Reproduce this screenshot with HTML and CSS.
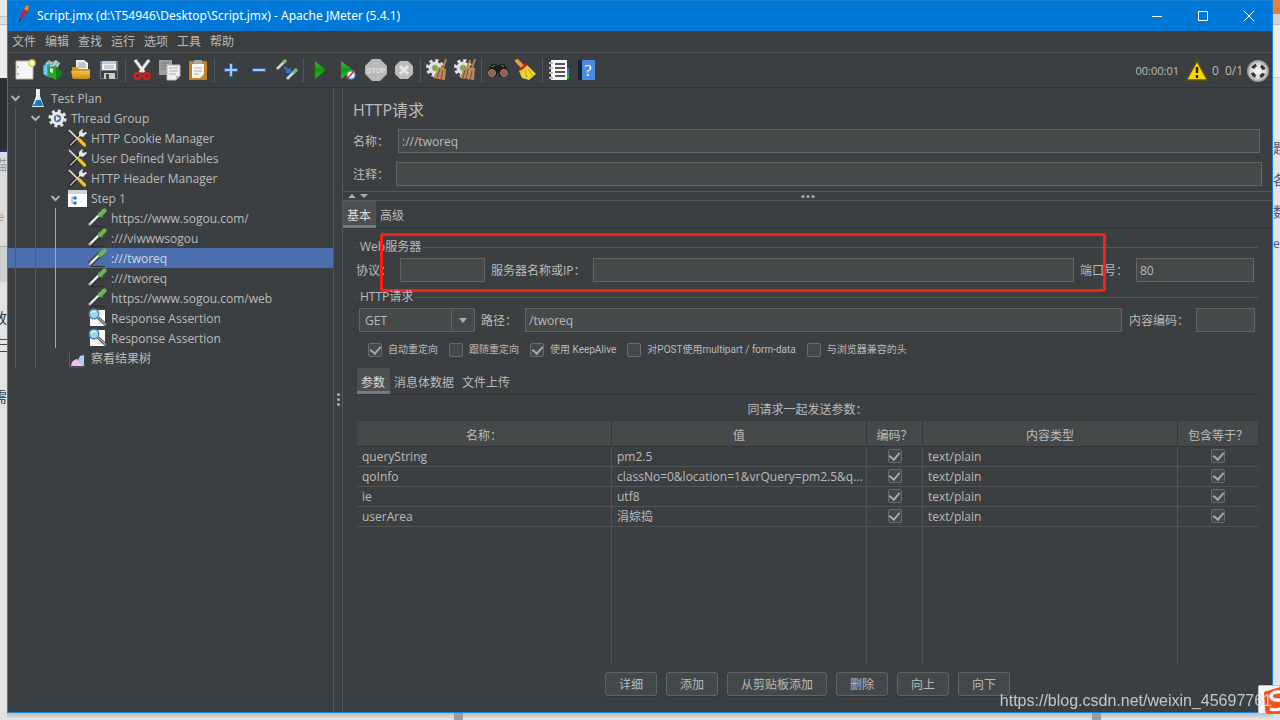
FILE: index.html
```html
<!DOCTYPE html>
<html lang="zh-CN">
<head>
<meta charset="utf-8">
<title>Apache JMeter</title>
<link rel="stylesheet" href="styles.css">
</head>
<body>
<svg class="defs" aria-hidden="true">
  <defs>
    <linearGradient id="gold" x1="0" y1="0" x2="0" y2="1"><stop offset="0" stop-color="#f5c04a"/><stop offset="1" stop-color="#c98a10"/></linearGradient>
    <linearGradient id="green" x1="0" y1="0" x2="0" y2="1"><stop offset="0" stop-color="#4fb04f"/><stop offset=".5" stop-color="#0a9a0a"/><stop offset="1" stop-color="#26c826"/></linearGradient>
    <radialGradient id="silver"><stop offset="0" stop-color="#fff"/><stop offset=".7" stop-color="#d4d4d4"/><stop offset="1" stop-color="#8e8e8e"/></radialGradient>
  </defs>
  <symbol id="gearbit" viewBox="0 0 24 24">
    <circle cx="10" cy="10" r="7.6" fill="none" stroke="#dcdcdc" stroke-width="3" stroke-dasharray="3.2 2.77"/>
    <circle cx="10" cy="10" r="6.5" fill="#e3e3e0"/><circle cx="10" cy="10" r="3" fill="#75b52c" stroke="#a9a9a0"/>
  </symbol>
  <symbol id="tools" viewBox="0 0 20 20">
    <path d="M2.500 17 12 7.500" stroke="#222" stroke-width="4" stroke-linecap="round"/>
    <path d="M2.500 17 12 7.500" stroke="#b9bbb8" stroke-width="1.6" stroke-linecap="round"/>
    <path d="M11 8V4l3-3 1 1-1 2 1 1 3-1 1 1-4 4z" fill="#e6e6e6"/>
    <path d="M1 2 10 11" stroke="#e3e3e3" stroke-width="1.6"/>
    <path d="M11 11.500 16.500 17" stroke="#f4c21c" stroke-width="3.2" stroke-linecap="round"/>
  </symbol>
  <symbol id="dropper" viewBox="0 0 20 20">
    <path d="M1 17 11 7" stroke="#20221f" stroke-width="4.600"/>
    <path d="M1 17 11 7" stroke="#b9bbb8" stroke-width="2.800"/>
    <path d="M3 15 10 8" stroke="#fff" stroke-width="1.200"/>
    <path d="M10 4l5 5" stroke="#3e7a30" stroke-width="2.500"/>
    <path d="M12 7 16.500 2.500" stroke="#6fb356" stroke-width="4.200" stroke-linecap="round"/>
    <path d="M3 18.500h14" stroke="#292b2c"/>
  </symbol>
  <symbol id="assert" viewBox="0 0 20 20">
    <path d="M2 2h15v16H2z" fill="#fafafa"/><path d="M10 14l5-2v4h-5z" fill="#ddd"/>
    <path d="M10 9.500 18 17" stroke="#555" stroke-width="3"/><path d="M10 9.500 18 17" stroke="#ccc"/>
    <circle cx="6" cy="6" r="4.800" fill="#9fd3ef" stroke="#4986ac" stroke-width="1.400"/>
    <path d="M3 5q2-3 5-1" stroke="#e1f7ff" fill="none" stroke-width="1.500"/>
  </symbol>
  <symbol id="chev" viewBox="0 0 20 20"><path d="M3.500 8 7.500 12 11.500 8" fill="none" stroke="#afb1b3" stroke-width="2"/></symbol>
</svg>

<div class="desktop">
  <div class="behind behind-left" aria-hidden="true">
    <i class="bl-page"></i><i class="bl-dark"></i><i class="bl-blue"></i>
    <div class="bl-grey"><span class="crop muted">描</span><span class="crop muted te">te</span></div>
    <i class="bl-band"></i>
    <div class="bl-white"><span class="crop">放</span><i class="bl-lines"></i><span class="crop">需</span></div>
  </div>

  <main class="window">
    <header class="titlebar">
      <svg class="feather" viewBox="0 0 16 20"><path d="M3 18 6 12" stroke="#272a55" stroke-width="1.300"/><path d="M4 15 6 8 11 2 13 3 11 9 7 14z" fill="#c3243a"/><path d="M8 5 11 1l2 1-1 5z" fill="#f08327"/></svg>
      <h1 class="title">Script.jmx (d:\T54946\Desktop\Script.jmx) - Apache JMeter (5.4.1)</h1>
      <button class="win-btn" aria-label="最小化"><svg viewBox="0 0 12 12"><path d="M1 6.500h10"/></svg></button>
      <button class="win-btn" aria-label="最大化"><svg viewBox="0 0 12 12"><path d="M1.500 1.500h9v9h-9z"/></svg></button>
      <button class="win-btn" aria-label="关闭"><svg viewBox="0 0 12 12"><path d="M1 1 11 11M11 1 1 11"/></svg></button>
    </header>

    <nav class="menubar">
      <button>文件</button><button>编辑</button><button>查找</button><button>运行</button><button>选项</button><button>工具</button><button>帮助</button>
    </nav>

    <div class="toolbar">
      <button aria-label="新建"><svg viewBox="0 0 24 24"><path d="M3 3h17v18H3z" fill="#f5f5f3" stroke="#b8b8b4"/><path d="M5 8v2M5 15v2" stroke="#888"/><circle cx="19" cy="5" r="3" fill="#fffbd0" stroke="#e5cf4c" stroke-width="1.600"/></svg></button>
      <button aria-label="模板"><svg viewBox="0 0 24 24"><path d="M4 6l4-4 3 2 4-2 4 3-3 6H5z" fill="#b9cbd5"/><path d="M7 3l3 4M13 3l-2 4M17 4l-3 4" stroke="#73899a"/><path d="M2 7l7-1v14l-7-4z" fill="#23a4d8"/><path d="M3 8l3-1v11l-3-2z" fill="#6bcdf0"/><path d="M7 9l8-1v14l-8-4z" fill="#22a92a"/><path d="M15 8l6 6v3l-6 5z" fill="#13821d"/><path d="M9 10l3 1v4l-3-1z" fill="#d9f7db"/></svg></button>
      <button aria-label="打开"><svg viewBox="0 0 24 24"><path d="M7 2h8l4 3v9H7z" fill="#f0f0ee"/><path d="M9 5h7M9 7h8M9 9h8" stroke="#999"/><path d="M3 9h5l2 2h11v9H3z" fill="#d5941c"/><path d="M2 13h19l-1 8H4z" fill="url(#gold)"/></svg></button>
      <button aria-label="保存"><svg viewBox="0 0 24 24"><path d="M3 3h18v18H4l-1-1z" fill="#777c82"/><path d="M4 13h16v7H4z" fill="#3a3e43"/><path d="M5 3h14v9H5z" fill="#f4f4f4"/><path d="M5 3h14v3H5z" fill="#b4cdee"/><path d="M7 8h10M7 10h10" stroke="#aaa"/><path d="M7 15h11v6H7z" fill="#c8cacc"/><path d="M9 16h3v5H9z" fill="#42464b"/></svg></button>
      <i class="sep"></i>
      <button aria-label="剪切"><svg viewBox="0 0 24 24"><path d="M5 2 14 14M19 2 10 14" stroke="#777" stroke-width="4"/><path d="M5 2 14 14M19 2 10 14" stroke="#ededed" stroke-width="2.600"/><ellipse cx="7.500" cy="18" rx="3.200" ry="2.800" fill="none" stroke="#d42020" stroke-width="2.600" transform="rotate(-35 7.500 18)"/><ellipse cx="16.500" cy="18" rx="3.200" ry="2.800" fill="none" stroke="#d42020" stroke-width="2.600" transform="rotate(35 16.500 18)"/></svg></button>
      <button aria-label="复制"><svg viewBox="0 0 24 24"><path d="M1 2h13v15H1z" fill="#9fa1a0"/><path d="M3 5h8M3 8h8M3 11h8" stroke="#777"/><path d="M9 7h13v11l-4 4H9z" fill="#f0f0ee" stroke="#bbb"/><path d="M11 10h9M11 13h9M11 16h7" stroke="#aaa"/><path d="M22 18h-4v4z" fill="#bbb"/></svg></button>
      <button aria-label="粘贴"><svg viewBox="0 0 24 24"><rect x="3" y="3" width="18" height="19" rx="1" fill="#c48222"/><path d="M6 6h12v14H6z" fill="#f7f7f5"/><path d="M8 2h8v4H8z" fill="#a5a8a8"/><path d="M8 10h8M8 13h8M8 16h5" stroke="#aaa"/><path d="M18 16l-4 4h4z" fill="#999"/></svg></button>
      <i class="sep"></i>
      <button aria-label="展开"><svg viewBox="0 0 24 24"><path d="M12 5v14M5 12h14" stroke="#3266a8" stroke-width="4"/><path d="M12 6v12M6 12h12" stroke="#a6c8f0" stroke-width="2"/></svg></button>
      <button aria-label="折叠"><svg viewBox="0 0 24 24"><path d="M5 12h14" stroke="#3266a8" stroke-width="4"/><path d="M6 12h12" stroke="#a6c8f0" stroke-width="2"/></svg></button>
      <button aria-label="切换"><svg viewBox="0 0 24 24"><path d="M2 11 10 3M12 21 21 12" stroke="#d2d5d0" stroke-width="2.600"/><path d="M8 5 11 2M18 15 22 11" stroke="#7bb765" stroke-width="3.400"/><path d="M9 9 14 13M15 10v4h-4" stroke="#3278d8" stroke-width="1.800" fill="none"/></svg></button>
      <i class="sep"></i>
      <button aria-label="启动"><svg viewBox="0 0 24 24"><path d="M7 3 18 12 7 21z" fill="url(#green)" stroke="#147014" stroke-width=".6"/></svg></button>
      <button aria-label="不停顿开始"><svg viewBox="0 0 24 24"><path d="M5 3 17 12 5 21z" fill="url(#green)"/><circle cx="15" cy="17" r="4" fill="#f2f6ff" stroke="#5ba0dc" stroke-width="1.400"/><path d="M11 21 19 12" stroke="#d82b2b" stroke-width="1.500"/></svg></button>
      <button disabled aria-label="停止"><svg viewBox="0 0 24 24"><path d="M8 1h8l7 7v8l-7 7H8l-7-7V8z" fill="#b9b9b9"/><text x="12" y="15" text-anchor="middle" class="stop">STOP</text></svg></button>
      <button disabled aria-label="关闭"><svg viewBox="0 0 24 24"><path d="M8 3h8l5 5v8l-5 5H8l-5-5V8z" fill="#bcbcbc"/><path d="M8 8l8 8M16 8l-8 8" stroke="#e6e6e6" stroke-width="3"/></svg></button>
      <i class="sep"></i>
      <button aria-label="清除"><svg viewBox="0 0 24 24"><use href="#gearbit"/><path d="M21 1 18 10" stroke="#b98247" stroke-width="2"/><path d="M14 9l7 2-1 11-12-2z" fill="#b88a5e"/><path d="M15 11 12 20M18 12l-2 9" stroke="#79512c"/></svg></button>
      <button aria-label="清除全部"><svg viewBox="0 0 24 24"><use href="#gearbit"/><path d="M17 2 14 10M22 1 19 10" stroke="#b98247" stroke-width="2"/><path d="M11 9l11 1-1 12-14-2z" fill="#b88a5e"/><path d="M12 12 10 20M15 11l-2 10M19 13l-2 9" stroke="#79512c"/></svg></button>
      <i class="sep"></i>
      <button aria-label="搜索"><svg viewBox="0 0 24 24"><path d="M1 14 6 6h4l2 2 2-2h4l5 8-3 5h-6l-2-5-2 5H4z" fill="#1c1c1c"/><path d="M6 9l3-2M15 7l3 2" stroke="#888"/><circle cx="6" cy="15" r="3.500" fill="#a05a3c" stroke="#8a8a8a"/><circle cx="18" cy="15" r="3.500" fill="#a05a3c" stroke="#8a8a8a"/></svg></button>
      <button aria-label="重置搜索"><svg viewBox="0 0 24 24"><path d="M3 3 9 9" stroke="#dca23c" stroke-width="4" stroke-linecap="round"/><path d="M5 13 13 7 22 16 15 22 8 20z" fill="#ead436"/><path d="M6 12 13 6" stroke="#cb2d25" stroke-width="2.600"/><path d="M11 12 13 20M14 11l5 7" stroke="#b29a16"/></svg></button>
      <i class="sep"></i>
      <button aria-label="函数助手"><svg viewBox="0 0 24 24"><path d="M19 10h3v6h-3z" fill="#2d7fe0"/><path d="M19 16h3v5h-3z" fill="#3bad36"/><path d="M4 2h16v20H4z" fill="#f8f8f8"/><path d="M8 6h10M8 10h10M8 14h10M8 18h10" stroke="#222" stroke-width="1.400"/><path d="M2 5h4M2 10h4M2 15h4M2 20h4" stroke="#bbb" stroke-width="2"/></svg></button>
      <button aria-label="帮助"><svg viewBox="0 0 24 24"><path d="M3 2h17v20H3z" fill="#4a8ae0"/><path d="M3 2h4v20H3z" fill="#15243b"/><text x="13" y="18" text-anchor="middle" class="help">?</text></svg></button>
      <div class="status">
        <span class="clock">00:00:01</span>
        <svg class="warn" viewBox="0 0 24 24"><path d="M12 2 22.500 21H1.500z" fill="#fbd500" stroke="#5e5010" stroke-width="1.500" stroke-linejoin="round"/><path d="M12 8v6M12 16v3" stroke="#1d1a08" stroke-width="2.400"/></svg>
        <span class="errors">0</span>
        <span class="threads">0/1</span>
        <svg class="remote" viewBox="0 0 24 24"><circle cx="12" cy="12" r="11" fill="url(#silver)"/><circle cx="12" cy="12" r="6" fill="none" stroke="#333" stroke-width="3.200" stroke-dasharray="4.600 4.820" stroke-dashoffset="-2.400"/></svg>
      </div>
    </div>

    <div class="split">
      <aside class="tree" role="tree">
        <div class="row" role="treeitem"><svg class="cell"><use href="#chev"/></svg><svg class="cell" viewBox="0 0 20 20"><path d="M8 1h4v7l4 11H4L8 8z" fill="#e4e8ea"/><path d="M7 12h6l2 6H5z" fill="#1878d2"/><path d="M9 2v7L6 16" stroke="#fff" fill="none"/></svg><span>Test Plan</span></div>
        <div class="row" role="treeitem"><i class="cell guide"></i><svg class="cell"><use href="#chev"/></svg><svg class="cell" viewBox="0 0 20 20"><circle cx="9.500" cy="10.500" r="7.600" fill="none" stroke="#e8e8e8" stroke-width="3" stroke-dasharray="3 2.970"/><circle cx="9.500" cy="10.500" r="5.200" fill="#587ba8" stroke="#eaeaea" stroke-width="3"/><path d="M8 8l4 2.500L8 13z" fill="#e5f1ff"/></svg><span>Thread Group</span></div>
        <div class="row" role="treeitem"><i class="cell guide"></i><i class="cell guide"></i><i class="cell"></i><svg class="cell"><use href="#tools"/></svg><span>HTTP Cookie Manager</span></div>
        <div class="row" role="treeitem"><i class="cell guide"></i><i class="cell guide"></i><i class="cell"></i><svg class="cell"><use href="#tools"/></svg><span>User Defined Variables</span></div>
        <div class="row" role="treeitem"><i class="cell guide"></i><i class="cell guide"></i><i class="cell"></i><svg class="cell"><use href="#tools"/></svg><span>HTTP Header Manager</span></div>
        <div class="row" role="treeitem"><i class="cell guide"></i><i class="cell guide"></i><svg class="cell"><use href="#chev"/></svg><svg class="cell" viewBox="0 0 20 20"><path d="M0 2h19v17H0z" fill="#fdfdfd"/><path d="M0 2h19v4H0z" fill="#d0d2d4"/><path d="M4 8v8M4 10h3M4 15h3" stroke="#9ab"/><circle cx="7" cy="10" r="1.800" fill="#2878cf"/><circle cx="7" cy="15" r="1.800" fill="#2878cf"/></svg><span>Step 1</span></div>
        <div class="row" role="treeitem"><i class="cell guide"></i><i class="cell guide"></i><i class="cell guide lit"></i><i class="cell"></i><svg class="cell"><use href="#dropper"/></svg><span>https://www.sogou.com/</span></div>
        <div class="row" role="treeitem"><i class="cell guide"></i><i class="cell guide"></i><i class="cell guide lit"></i><i class="cell"></i><svg class="cell"><use href="#dropper"/></svg><span>:///viwwwsogou</span></div>
        <div class="row selected" role="treeitem" aria-selected="true"><i class="cell guide"></i><i class="cell guide"></i><i class="cell guide lit"></i><i class="cell"></i><svg class="cell"><use href="#dropper"/></svg><span>:///tworeq</span></div>
        <div class="row" role="treeitem"><i class="cell guide"></i><i class="cell guide"></i><i class="cell guide lit"></i><i class="cell"></i><svg class="cell"><use href="#dropper"/></svg><span>:///tworeq</span></div>
        <div class="row" role="treeitem"><i class="cell guide"></i><i class="cell guide"></i><i class="cell guide lit"></i><i class="cell"></i><svg class="cell"><use href="#dropper"/></svg><span>https://www.sogou.com/web</span></div>
        <div class="row" role="treeitem"><i class="cell guide"></i><i class="cell guide"></i><i class="cell guide lit"></i><i class="cell"></i><svg class="cell"><use href="#assert"/></svg><span>Response Assertion</span></div>
        <div class="row" role="treeitem"><i class="cell guide"></i><i class="cell guide"></i><i class="cell guide lit"></i><i class="cell"></i><svg class="cell"><use href="#assert"/></svg><span>Response Assertion</span></div>
        <div class="row" role="treeitem"><i class="cell guide"></i><i class="cell guide"></i><i class="cell"></i><svg class="cell" viewBox="0 0 20 20"><path d="M1.500 4v15H17" fill="none" stroke="#5b5e60"/><path d="M3 18l1-4 4-3 3 2 2-2 3 1v6z" fill="#f0a6e4"/><path d="M10 12l2-4 4-1v11h-2z" fill="#a9cdf7"/><path d="M5 13l4-2 5 7H3z" fill="#f7bdee"/></svg><span>察看结果树</span></div>
      </aside>

      <div class="divider"><i></i><i></i><i></i></div>

      <section class="editor">
        <h2>HTTP请求</h2>
        <div class="field name-row"><label for="name">名称：</label><input id="name" value=":///tworeq"></div>
        <div class="field comment-row"><label for="comment">注释：</label><input id="comment"></div>
        <div class="hdivider"><b class="up"></b><b class="down"></b><span class="dots"><i></i><i></i><i></i></span></div>

        <div class="tabs" role="tablist"><button role="tab" class="active" aria-selected="true">基本</button><button role="tab">高级</button></div>

        <div class="group web">
          <div class="legend">Web服务器</div>
          <div class="line web-line">
            <label class="w-proto" for="proto">协议：</label><input class="i-proto" id="proto">
            <label class="w-server" for="server">服务器名称或IP：</label><input class="grow" id="server">
            <label class="w-port" for="port">端口号：</label><input class="i-port" id="port" value="80">
          </div>
          <div class="callout"></div>
        </div>

        <div class="group http">
          <div class="legend">HTTP请求</div>
          <div class="line http-line">
            <div class="combo"><select aria-label="方法"><option>GET</option></select><b class="down"></b></div>
            <label class="w-path" for="path">路径：</label><input class="grow" id="path" value="/tworeq">
            <label class="w-enc" for="enc">内容编码：</label><input class="i-enc" id="enc">
          </div>
        </div>

        <div class="checks">
          <label><input type="checkbox" checked>自动重定向</label>
          <label><input type="checkbox">跟随重定向</label>
          <label><input type="checkbox" checked>使用 KeepAlive</label>
          <label><input type="checkbox">对POST使用multipart / form-data</label>
          <label><input type="checkbox">与浏览器兼容的头</label>
        </div>

        <div class="params">
          <div class="tabs" role="tablist"><button role="tab" class="active" aria-selected="true">参数</button><button role="tab">消息体数据</button><button role="tab">文件上传</button></div>
          <div class="caption">同请求一起发送参数：</div>
          <div class="table-box">
            <table>
              <colgroup><col><col><col class="c-enc"><col><col class="c-inc"></colgroup>
              <thead><tr><th>名称：</th><th>值</th><th>编码？</th><th>内容类型</th><th>包含等于？</th></tr></thead>
              <tbody>
                <tr><td>queryString</td><td>pm2.5</td><td class="mid"><input type="checkbox" checked aria-label="编码"></td><td>text/plain</td><td class="mid"><input type="checkbox" checked aria-label="包含等于"></td></tr>
                <tr><td>qoInfo</td><td>classNo=0&amp;location=1&amp;vrQuery=pm2.5&amp;q...</td><td class="mid"><input type="checkbox" checked aria-label="编码"></td><td>text/plain</td><td class="mid"><input type="checkbox" checked aria-label="包含等于"></td></tr>
                <tr><td>ie</td><td>utf8</td><td class="mid"><input type="checkbox" checked aria-label="编码"></td><td>text/plain</td><td class="mid"><input type="checkbox" checked aria-label="包含等于"></td></tr>
                <tr><td>userArea</td><td>涓婃捣</td><td class="mid"><input type="checkbox" checked aria-label="编码"></td><td>text/plain</td><td class="mid"><input type="checkbox" checked aria-label="包含等于"></td></tr>
                <tr class="filler"><td></td><td></td><td></td><td></td><td></td></tr>
              </tbody>
            </table>
          </div>
        </div>
        <div class="actions"><button>详细</button><button>添加</button><button>从剪贴板添加</button><button>删除</button><button>向上</button><button>向下</button></div>
      </section>
    </div>
  </main>

  <div class="behind behind-right" aria-hidden="true">
    <i class="br-orange"></i><i class="br-bar"></i><i class="br-page"></i>
    <div class="br-text"><span class="crop">题</span><span class="crop">各</span><span class="crop">数</span><span class="crop er">er</span></div>
  </div>
  <div class="behind-bottom" aria-hidden="true"><i></i><i></i></div>
</div>
<svg class="ime" viewBox="0 0 22 30" aria-hidden="true"><rect x=".5" y=".5" width="30" height="28" rx="1" fill="#f4f6f9" stroke="#b8c4d4"/><path d="M6 7 22 2v27H11Q7 29 7 24z" fill="#f4511e"/><path d="M24 7Q14 6 13 11q0 4 6 4t7 3" fill="none" stroke="#fff" stroke-width="3.400"/><path d="M12 24q6 2 12-1" fill="none" stroke="#fff" stroke-width="3"/></svg>
<div class="watermark">https://blog.csdn.net/weixin_45697761</div>
</body>
</html>
```

FILE: styles.css
```css
* { box-sizing: border-box; }
html, body { height: 100%; margin: 0; overflow: hidden; }
body {
  font: 12px/20px "Open Sans", "Noto Sans CJK SC", sans-serif;
  color: #bbbbbb;
  background: #e4e4e4;
}
button, input, select { font: inherit; color: inherit; margin: 0; padding: 0; border: 0; background: none; outline: 0; }
h1, h2 { margin: 0; font-weight: 400; }
label { white-space: nowrap; }
i { display: block; }
.defs { position: absolute; width: 0; height: 0; }

.desktop {
  height: 100%;
  display: grid;
  grid-template: minmax(0, 1fr) 7px / 7px minmax(0, 1fr) 7px;
}

/* page behind the window */
.behind { display: flex; flex-direction: column; overflow: hidden; color: #333; font-size: 14px; grid-row: 1 / 3; }
.behind-right { grid-column: 3; color: #4a5678; }
.behind-left { grid-column: 1; background: #e3e3e3; }
.bl-page { height: 78px; background: linear-gradient(#e8e8e8 16px, #bbb 16px 17px, #ddd 17px 24px, #bbb 24px 25px, #ececec 25px); }
.bl-dark { height: 71px; background: #2d2e30; }
.bl-blue { height: 3px; background: #173a70; }
.bl-grey { height: 95px; background: #dcdcdc; border-bottom: 1px solid #aaa; padding-top: 3px; display: flex; flex-direction: column; gap: 32px; }
.bl-band { height: 35px; background: #cfcfcf; }
.bl-white { padding-top: 26px; display: flex; flex-direction: column; }
.crop { display: block; width: 14px; white-space: nowrap; align-self: flex-end; }
.behind-right .crop { align-self: flex-start; }
.muted { color: #9298a4; }
.muted.te { color: #a89a80; }
.te, .er { font-size: 12px; }
.bl-lines { height: 14px; margin: 11px 0 34px; background: linear-gradient(#444 1px, transparent 1px 5px, #444 5px 6px, transparent 6px 12px, #444 12px 13px, transparent 13px); }
.br-orange { height: 14px; background: #ec7c38; }
.br-bar { height: 11px; background: #d2d2d2; border-bottom: 1px solid #bbb; }
.br-page { height: 113px; background: linear-gradient(#ececec 52px, #c9c9c9 52px 53px, #e6e6e6 53px); }
.br-text { display: flex; flex-direction: column; gap: 12px; background: #e2e4e8; flex: 1; }
.behind-bottom { grid-column: 2; grid-row: 2; background: linear-gradient(#bdbdbd, #e8e8e8); display: flex; justify-content: space-between; padding: 0 172px 0 447px; }
.behind-bottom i { width: 9px; background: #9c9c9c; }

.window {
  grid-column: 2; grid-row: 1;
  display: flex; flex-direction: column;
  background: #3c3f41;
  border: 1px solid #1883d7;
  min-width: 0;
}

.titlebar { height: 30px; flex: none; display: flex; align-items: center; background: #0078d7; color: #fff; }
.feather { width: 16px; height: 20px; margin: 0 5px 4px 8px; }
.title { flex: 1; font-size: 12px; font-family: "Noto Sans", sans-serif; line-height: 20px; }
.win-btn { width: 46px; height: 28px; display: grid; place-items: center; }
.win-btn svg { width: 12px; height: 12px; fill: none; stroke: #fff; }

.menubar { height: 22px; flex: none; display: flex; gap: 9px; padding: 1px 0 0 4px; border-bottom: 1px solid #515151; }

.toolbar { height: 35px; flex: none; display: flex; align-items: center; padding-left: 3px; border-bottom: 1px solid #323537; }
.toolbar button { width: 28px; height: 28px; display: grid; place-items: center; }
.toolbar button svg { width: 24px; height: 24px; }
.sep { width: 1px; height: 24px; margin: 0 2px; background: #545759; }
.stop { font: 700 7px "Liberation Sans", sans-serif; fill: #dedede; }
.help { font: 17px "Liberation Serif", serif; fill: #fff; }
.status { margin-left: auto; display: flex; align-items: center; padding-right: 2px; padding-top: 1px; }
.clock { margin-right: 6px; font-size: 11px; }
.warn, .remote { width: 24px; height: 24px; }
.errors { margin: 0 6px 0 3px; }
.threads { margin-right: 3px; }

.split { flex: 1; min-height: 0; display: grid; grid-template-columns: 325px 10px minmax(0, 1fr); }

.row { height: 20px; display: flex; align-items: center; white-space: nowrap; }
.row span { margin-left: 3px; padding-top: 2px; }
.cell { width: 20px; height: 20px; flex: none; }
.guide { background: linear-gradient(#595c5e, #595c5e) 7px 0 / 1px 100% no-repeat; }
.guide.lit { background-image: linear-gradient(#7fb2e5, #7fb2e5); }
.selected { background: #4b6eaf; }
.selected span { color: #d5dbe6; }

.divider { border: solid #555759; border-width: 0 1px; display: flex; flex-direction: column; align-items: center; justify-content: center; gap: 2px; padding-bottom: 2px; }
.divider i, .dots i { width: 3px; height: 3px; border-radius: 50%; background: #adadad; }

.editor { display: flex; flex-direction: column; min-width: 0; }
.editor h2 { font-size: 16px; line-height: 24px; padding: 10px 10px 7px; }
.editor input:not([type]), .combo {
  height: 24px; min-width: 0; padding: 1px 3px 0;
  background: #45494a; border: 1px solid #646464;
}
.field { display: flex; align-items: center; padding-left: 10px; }
.field label, .line label { padding-top: 2px; }
.field input { flex: 1; }
.name-row { padding-right: 12px; margin-bottom: 9px; }
.name-row label { width: 45px; }
.comment-row { padding-right: 10px; margin-bottom: 5px; }
.comment-row label { width: 43px; }

.hdivider { position: relative; height: 10px; border: solid #555759; border-width: 1px 0; display: flex; align-items: center; gap: 4px; padding-left: 5px; }
.up, .down { border: solid transparent; border-width: 0 4px; width: 0; height: 0; }
.up { border-bottom: 4px solid #adadad; }
.down { border-top: 4px solid #adadad; }
.dots { display: flex; gap: 2px; position: absolute; left: 50%; transform: translateX(-50%); }

.tabs { display: flex; border-bottom: 1px solid #323537; }
.tabs button { height: 27px; padding: 5px 4px 0; border-bottom: 3px solid transparent; line-height: 19px; white-space: nowrap; }
.tabs .active { background: #4c5052; border-color: #747a80; color: #dddddd; padding-right: 5px; }

.group { position: relative; padding: 0 14px; }
.web { margin-top: 8px; }
.legend { display: flex; align-items: center; gap: 2px; height: 20px; white-space: nowrap; margin-bottom: 1px; }
.legend::before, .legend::after { content: ""; height: 1px; background: #555759; }
.legend::before { width: 2px; margin-left: -1px; }
.legend::after { flex: 1; }
.line { display: flex; align-items: center; }
.web-line { padding-right: 4px; margin-left: -1px; }
.grow { flex: 1; }
.w-proto { width: 44px; }
.i-proto { width: 85px; margin-right: 6px; }
.w-server { width: 102px; }
.w-port { width: 62px; padding-left: 6px; }
.i-port { width: 118px; }
.http { margin-top: 5px; }
.http-line { padding: 0 3px 0 2px; }
.combo { width: 116px; display: flex; align-items: center; border-radius: 2px; padding: 0; }
.combo select { flex: 1; height: 22px; appearance: none; padding: 1px 0 0 5px; border-right: 1px solid #646464; }
.combo .down { margin: 0 7px; border-width: 5px 4px 0; }
.w-path { width: 50px; padding-left: 6px; }
.w-enc { width: 74px; padding-left: 7px; }
.i-enc { width: 59px; }
.callout { position: absolute; left: 37px; top: -4px; width: calc(100% - 203px); height: 59px; border: 3px solid #ff1e14; border-radius: 3px; pointer-events: none; }

input[type="checkbox"] { appearance: none; width: 14px; height: 14px; border: 1px solid #6b6b6b; border-radius: 2px; background: #43494a; display: grid; place-items: center; }
input[type="checkbox"]:checked::before { content: ""; width: 5px; height: 8px; border: solid #a8a8a8; border-width: 0 2px 2px 0; transform: translateY(-1px) rotate(40deg); }
.checks { display: flex; gap: 11px; padding: 8px 0 8px 25px; font-size: 10px; font-family: Roboto, "Noto Sans CJK SC", sans-serif; }
.checks label { display: flex; align-items: center; gap: 6px; }

.params { flex: 1; min-height: 0; display: flex; flex-direction: column; padding: 0 14px; }
.params .tabs button { height: 26px; }
.caption { text-align: center; line-height: 20px; padding: 5px 0 1px; }
.table-box { flex: 1; min-height: 0; }
table { width: 100%; height: 100%; table-layout: fixed; border-collapse: separate; border-spacing: 0; }
.c-enc { width: 56px; }
.c-inc { width: 80px; }
th { height: 26px; padding: 4px 0 0; line-height: 19px; font-weight: 400; background: #45494a; border-right: 1px solid #323537; border-bottom: 1px solid #323537; white-space: nowrap; }
td { height: 20px; padding: 0 5px; line-height: 19px; border-right: 1px solid #505355; border-bottom: 1px solid #505355; white-space: nowrap; overflow: hidden; }
th:last-child, td:last-child { border-right: 0; }
.mid { padding-bottom: 2px; }
.mid input { margin: 0 auto; }
.filler td { height: auto; border-bottom: 0; }

.actions { flex: none; display: flex; justify-content: center; gap: 9px; padding: 7px 0 16px; }
.actions button { height: 24px; padding: 2px 13px 0; min-width: 52px; border: 1px solid #616365; border-radius: 3px; background: #43484a; box-shadow: 0 1px 1px #333638; line-height: 20px; white-space: nowrap; }

.ime { position: fixed; right: 0; bottom: 5px; width: 22px; height: 30px; }
.watermark { position: fixed; right: 8px; bottom: 9px; font: 16px/20px "Liberation Sans", sans-serif; color: rgba(230, 230, 230, .8); }
```
